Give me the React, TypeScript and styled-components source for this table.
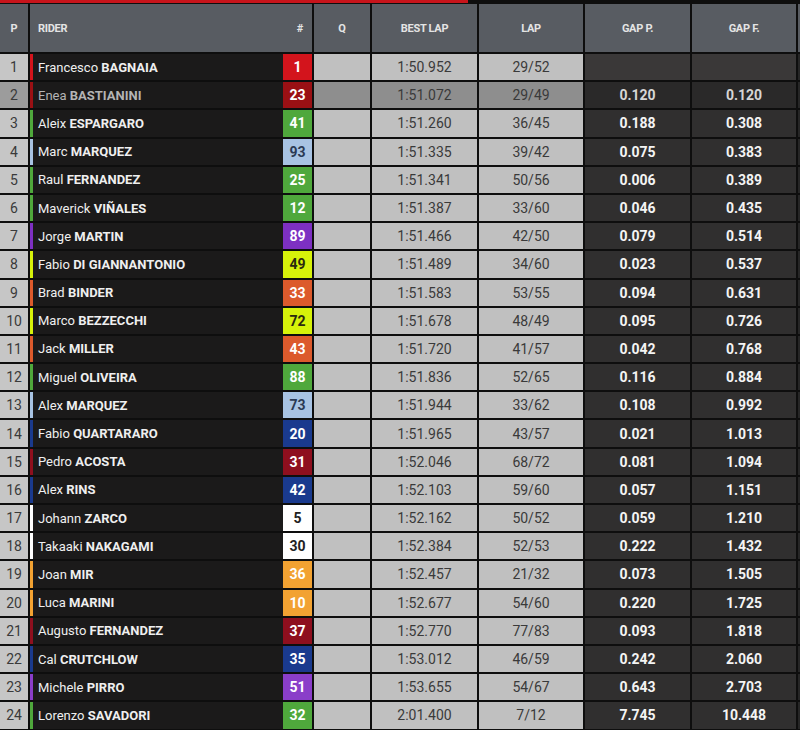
import React from 'react';
import styled, { createGlobalStyle } from 'styled-components';

type Rider = {
    first: string;
    last: string;
    num: number;
    color: string;
    ink?: string;
    best: string;
    lap: string;
    gapP: string;
    gapF: string;
}

const RED = '#d3141c';
const DARKRED = '#8e0f1e';
const GREEN = '#4fa83c';
const LIGHTBLUE = '#a8c3e3';
const PURPLE = '#7d30c2';
const LIME = '#d6f20a';
const ORANGE = '#dc5a2c';
const NAVY = '#1a3a8e';
const AMBER = '#f2a232';

const riders: Rider[] = [
    { first: 'Francesco', last: 'BAGNAIA', num: 1, color: RED, best: '1:50.952', lap: '29/52', gapP: '', gapF: '' },
    { first: 'Enea', last: 'BASTIANINI', num: 23, color: '#9a1014', best: '1:51.072', lap: '29/49', gapP: '0.120', gapF: '0.120' },
    { first: 'Aleix', last: 'ESPARGARO', num: 41, color: GREEN, best: '1:51.260', lap: '36/45', gapP: '0.188', gapF: '0.308' },
    { first: 'Marc', last: 'MARQUEZ', num: 93, color: LIGHTBLUE, ink: '#2b3a55', best: '1:51.335', lap: '39/42', gapP: '0.075', gapF: '0.383' },
    { first: 'Raul', last: 'FERNANDEZ', num: 25, color: GREEN, best: '1:51.341', lap: '50/56', gapP: '0.006', gapF: '0.389' },
    { first: 'Maverick', last: 'VIÑALES', num: 12, color: GREEN, best: '1:51.387', lap: '33/60', gapP: '0.046', gapF: '0.435' },
    { first: 'Jorge', last: 'MARTIN', num: 89, color: PURPLE, best: '1:51.466', lap: '42/50', gapP: '0.079', gapF: '0.514' },
    { first: 'Fabio', last: 'DI GIANNANTONIO', num: 49, color: LIME, ink: '#2a2a10', best: '1:51.489', lap: '34/60', gapP: '0.023', gapF: '0.537' },
    { first: 'Brad', last: 'BINDER', num: 33, color: ORANGE, best: '1:51.583', lap: '53/55', gapP: '0.094', gapF: '0.631' },
    { first: 'Marco', last: 'BEZZECCHI', num: 72, color: LIME, ink: '#2a2a10', best: '1:51.678', lap: '48/49', gapP: '0.095', gapF: '0.726' },
    { first: 'Jack', last: 'MILLER', num: 43, color: ORANGE, best: '1:51.720', lap: '41/57', gapP: '0.042', gapF: '0.768' },
    { first: 'Miguel', last: 'OLIVEIRA', num: 88, color: GREEN, best: '1:51.836', lap: '52/65', gapP: '0.116', gapF: '0.884' },
    { first: 'Alex', last: 'MARQUEZ', num: 73, color: LIGHTBLUE, ink: '#2b3a55', best: '1:51.944', lap: '33/62', gapP: '0.108', gapF: '0.992' },
    { first: 'Fabio', last: 'QUARTARARO', num: 20, color: NAVY, best: '1:51.965', lap: '43/57', gapP: '0.021', gapF: '1.013' },
    { first: 'Pedro', last: 'ACOSTA', num: 31, color: DARKRED, best: '1:52.046', lap: '68/72', gapP: '0.081', gapF: '1.094' },
    { first: 'Alex', last: 'RINS', num: 42, color: NAVY, best: '1:52.103', lap: '59/60', gapP: '0.057', gapF: '1.151' },
    { first: 'Johann', last: 'ZARCO', num: 5, color: '#ffffff', ink: '#222222', best: '1:52.162', lap: '50/52', gapP: '0.059', gapF: '1.210' },
    { first: 'Takaaki', last: 'NAKAGAMI', num: 30, color: '#ffffff', ink: '#222222', best: '1:52.384', lap: '52/53', gapP: '0.222', gapF: '1.432' },
    { first: 'Joan', last: 'MIR', num: 36, color: AMBER, best: '1:52.457', lap: '21/32', gapP: '0.073', gapF: '1.505' },
    { first: 'Luca', last: 'MARINI', num: 10, color: AMBER, best: '1:52.677', lap: '54/60', gapP: '0.220', gapF: '1.725' },
    { first: 'Augusto', last: 'FERNANDEZ', num: 37, color: DARKRED, best: '1:52.770', lap: '77/83', gapP: '0.093', gapF: '1.818' },
    { first: 'Cal', last: 'CRUTCHLOW', num: 35, color: NAVY, best: '1:53.012', lap: '46/59', gapP: '0.242', gapF: '2.060' },
    { first: 'Michele', last: 'PIRRO', num: 51, color: '#8a3ec9', best: '1:53.655', lap: '54/67', gapP: '0.643', gapF: '2.703' },
    { first: 'Lorenzo', last: 'SAVADORI', num: 32, color: GREEN, best: '2:01.400', lap: '7/12', gapP: '7.745', gapF: '10.448' },
];

const GlobalStyle = createGlobalStyle`
    body {
        margin: 0;
        background: #0e0e0e;
        font-family: Roboto, "Liberation Sans", sans-serif;
    }
`

const COLUMNS = '28px 282px 56px 105px 104px 105px 104px 2px';

const Table = styled.div`
    width: 800px;
    height: 730px;
    overflow: hidden;
    background: #0e0e0e;
`

const TopBar = styled.div`
    width: 468px;
    height: 3px;
    background: #c8141b;
    margin-bottom: 1px;
`

const HeaderRow = styled.div`
    display: grid;
    grid-template-columns: ${COLUMNS};
    column-gap: 2px;
    height: 48px;
    margin-bottom: 2px;
`

const HeadCell = styled.div<{ $left?: boolean }>`
    background: #585c62;
    color: #e4e4e4;
    font-size: 11px;
    font-weight: 700;
    letter-spacing: -0.3px;
    display: flex;
    align-items: center;
    justify-content: ${({ $left }) => ($left ? 'space-between' : 'center')};
    padding: ${({ $left }) => ($left ? '0 9px 0 8px' : '0')};
`

const Body = styled.div`
    display: flex;
    flex-direction: column;
    gap: 2px;
`

const Row = styled.div`
    display: grid;
    grid-template-columns: ${COLUMNS};
    column-gap: 2px;
    height: 26.2px;
`

const PosCell = styled.div<{ $dim?: boolean }>`
    background: ${({ $dim }) => ($dim ? '#9c9c9c' : '#c6c6c6')};
    color: #3a3a3a;
    font-size: 14px;
    display: flex;
    align-items: center;
    justify-content: center;
`

const RiderCell = styled.div<{ $stripe: string; $dim?: boolean }>`
    background: #1b1a1a;
    border-left: 3px solid ${({ $stripe }) => $stripe};
    display: flex;
    align-items: center;
    justify-content: space-between;
    color: ${({ $dim }) => ($dim ? '#b4b4b4' : '#efefef')};
    font-size: 13px;
    padding-left: 5px;
`

const Name = styled.span`
    white-space: nowrap;
    b {
        font-weight: 700;
    }
`

const Badge = styled.div<{ $bg: string; $ink?: string }>`
    width: 29px;
    height: 100%;
    background: ${({ $bg }) => $bg};
    color: ${({ $ink }) => $ink || '#ffffff'};
    font-size: 14px;
    font-weight: 700;
    display: flex;
    align-items: center;
    justify-content: center;
`

const GreyCell = styled.div<{ $dim?: boolean }>`
    background: ${({ $dim }) => ($dim ? '#8e8e8e' : '#c0c0c0')};
    color: #3a3a3a;
    font-size: 14px;
    display: flex;
    align-items: center;
    justify-content: center;
`

const GapCell = styled.div<{ $tone: 'lead' | 'dim' | 'normal' }>`
    background: ${({ $tone }) => ($tone === 'lead' ? '#3a3838' : $tone === 'dim' ? '#2a2929' : '#302f2f')};
    color: ${({ $tone }) => ($tone === 'dim' ? '#d6d6d6' : '#f4f4f4')};
    font-size: 14px;
    font-weight: 700;
    display: flex;
    align-items: center;
    justify-content: center;
`

const EdgeCell = styled.div`
    background: #262626;
`

const App: React.FC = () => {
    return (
        <>
            <GlobalStyle />
            <Table>
                <TopBar />
                <HeaderRow>
                    <HeadCell>P</HeadCell>
                    <HeadCell $left>
                        <span>RIDER</span>
                        <span>#</span>
                    </HeadCell>
                    <HeadCell>Q</HeadCell>
                    <HeadCell>BEST LAP</HeadCell>
                    <HeadCell>LAP</HeadCell>
                    <HeadCell>GAP P.</HeadCell>
                    <HeadCell>GAP F.</HeadCell>
                    <HeadCell />
                </HeaderRow>
                <Body>
                    {riders.map((r, i) => {
                        const dim = i === 1;
                        const tone = i === 0 ? 'lead' : dim ? 'dim' : 'normal';
                        return (
                            <Row key={i}>
                                <PosCell $dim={dim}>{i + 1}</PosCell>
                                <RiderCell $stripe={r.color} $dim={dim}>
                                    <Name>
                                        {r.first} <b>{r.last}</b>
                                    </Name>
                                    <Badge $bg={r.color} $ink={r.ink}>{r.num}</Badge>
                                </RiderCell>
                                <GreyCell $dim={dim} />
                                <GreyCell $dim={dim}>{r.best}</GreyCell>
                                <GreyCell $dim={dim}>{r.lap}</GreyCell>
                                <GapCell $tone={tone}>{r.gapP}</GapCell>
                                <GapCell $tone={tone}>{r.gapF}</GapCell>
                                <EdgeCell />
                            </Row>
                        );
                    })}
                </Body>
            </Table>
        </>
    )
}

export default App;
